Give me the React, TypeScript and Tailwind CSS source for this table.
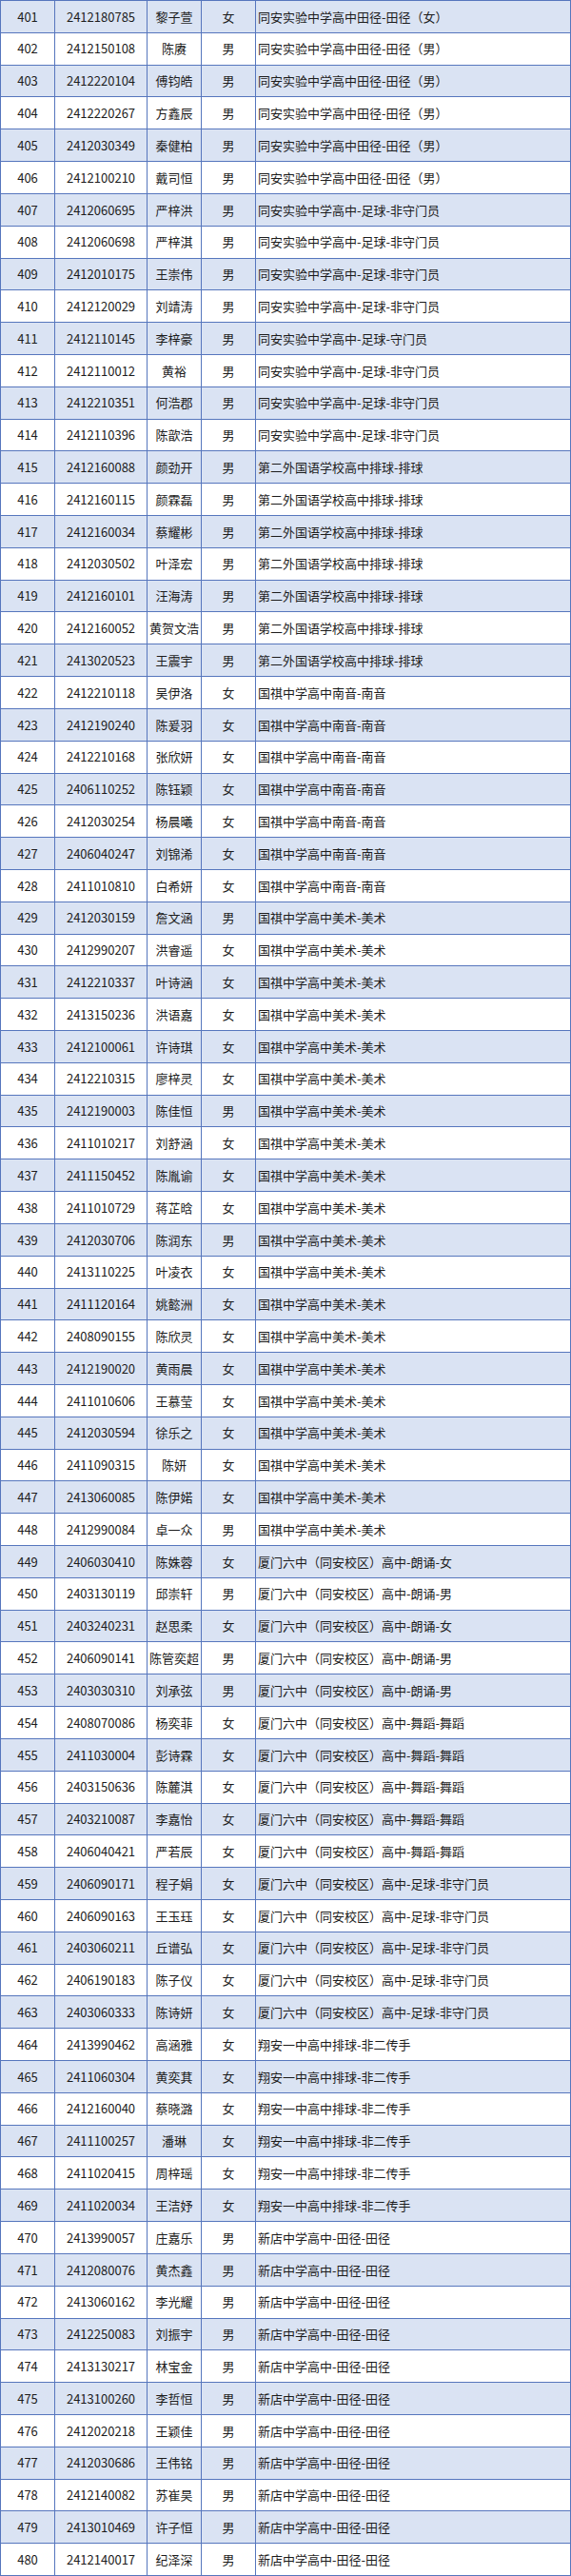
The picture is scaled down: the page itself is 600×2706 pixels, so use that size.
import React from 'react';

const rows: [string, string, string, string][] = [
  ['2412180785', '黎子萱', '女', '同安实验中学高中田径-田径（女）'],
  ['2412150108', '陈赓', '男', '同安实验中学高中田径-田径（男）'],
  ['2412220104', '傅钧皓', '男', '同安实验中学高中田径-田径（男）'],
  ['2412220267', '方鑫辰', '男', '同安实验中学高中田径-田径（男）'],
  ['2412030349', '秦健柏', '男', '同安实验中学高中田径-田径（男）'],
  ['2412100210', '戴司恒', '男', '同安实验中学高中田径-田径（男）'],
  ['2412060695', '严梓洪', '男', '同安实验中学高中-足球-非守门员'],
  ['2412060698', '严梓淇', '男', '同安实验中学高中-足球-非守门员'],
  ['2412010175', '王崇伟', '男', '同安实验中学高中-足球-非守门员'],
  ['2412120029', '刘靖涛', '男', '同安实验中学高中-足球-非守门员'],
  ['2412110145', '李梓豪', '男', '同安实验中学高中-足球-守门员'],
  ['2412110012', '黄裕', '男', '同安实验中学高中-足球-非守门员'],
  ['2412210351', '何浩郡', '男', '同安实验中学高中-足球-非守门员'],
  ['2412110396', '陈歆浩', '男', '同安实验中学高中-足球-非守门员'],
  ['2412160088', '颜劲开', '男', '第二外国语学校高中排球-排球'],
  ['2412160115', '颜霖磊', '男', '第二外国语学校高中排球-排球'],
  ['2412160034', '蔡耀彬', '男', '第二外国语学校高中排球-排球'],
  ['2412030502', '叶泽宏', '男', '第二外国语学校高中排球-排球'],
  ['2412160101', '汪海涛', '男', '第二外国语学校高中排球-排球'],
  ['2412160052', '黄贺文浩', '男', '第二外国语学校高中排球-排球'],
  ['2413020523', '王震宇', '男', '第二外国语学校高中排球-排球'],
  ['2412210118', '吴伊洛', '女', '国祺中学高中南音-南音'],
  ['2412190240', '陈爰羽', '女', '国祺中学高中南音-南音'],
  ['2412210168', '张欣妍', '女', '国祺中学高中南音-南音'],
  ['2406110252', '陈钰颖', '女', '国祺中学高中南音-南音'],
  ['2412030254', '杨晨曦', '女', '国祺中学高中南音-南音'],
  ['2406040247', '刘锦浠', '女', '国祺中学高中南音-南音'],
  ['2411010810', '白希妍', '女', '国祺中学高中南音-南音'],
  ['2412030159', '詹文涵', '男', '国祺中学高中美术-美术'],
  ['2412990207', '洪睿遥', '女', '国祺中学高中美术-美术'],
  ['2412210337', '叶诗涵', '女', '国祺中学高中美术-美术'],
  ['2413150236', '洪语嘉', '女', '国祺中学高中美术-美术'],
  ['2412100061', '许诗琪', '女', '国祺中学高中美术-美术'],
  ['2412210315', '廖梓灵', '女', '国祺中学高中美术-美术'],
  ['2412190003', '陈佳恒', '男', '国祺中学高中美术-美术'],
  ['2411010217', '刘舒涵', '女', '国祺中学高中美术-美术'],
  ['2411150452', '陈胤谕', '女', '国祺中学高中美术-美术'],
  ['2411010729', '蒋芷晗', '女', '国祺中学高中美术-美术'],
  ['2412030706', '陈润东', '男', '国祺中学高中美术-美术'],
  ['2413110225', '叶凌衣', '女', '国祺中学高中美术-美术'],
  ['2411120164', '姚懿洲', '女', '国祺中学高中美术-美术'],
  ['2408090155', '陈欣灵', '女', '国祺中学高中美术-美术'],
  ['2412190020', '黄雨晨', '女', '国祺中学高中美术-美术'],
  ['2411010606', '王慕莹', '女', '国祺中学高中美术-美术'],
  ['2412030594', '徐乐之', '女', '国祺中学高中美术-美术'],
  ['2411090315', '陈妍', '女', '国祺中学高中美术-美术'],
  ['2413060085', '陈伊婼', '女', '国祺中学高中美术-美术'],
  ['2412990084', '卓一众', '男', '国祺中学高中美术-美术'],
  ['2406030410', '陈姝蓉', '女', '厦门六中（同安校区）高中-朗诵-女'],
  ['2403130119', '邱崇轩', '男', '厦门六中（同安校区）高中-朗诵-男'],
  ['2403240231', '赵思柔', '女', '厦门六中（同安校区）高中-朗诵-女'],
  ['2406090141', '陈管奕超', '男', '厦门六中（同安校区）高中-朗诵-男'],
  ['2403030310', '刘承弦', '男', '厦门六中（同安校区）高中-朗诵-男'],
  ['2408070086', '杨奕菲', '女', '厦门六中（同安校区）高中-舞蹈-舞蹈'],
  ['2411030004', '彭诗霖', '女', '厦门六中（同安校区）高中-舞蹈-舞蹈'],
  ['2403150636', '陈麓淇', '女', '厦门六中（同安校区）高中-舞蹈-舞蹈'],
  ['2403210087', '李嘉怡', '女', '厦门六中（同安校区）高中-舞蹈-舞蹈'],
  ['2406040421', '严若辰', '女', '厦门六中（同安校区）高中-舞蹈-舞蹈'],
  ['2406090171', '程子娟', '女', '厦门六中（同安校区）高中-足球-非守门员'],
  ['2406090163', '王玉珏', '女', '厦门六中（同安校区）高中-足球-非守门员'],
  ['2403060211', '丘谱弘', '女', '厦门六中（同安校区）高中-足球-非守门员'],
  ['2406190183', '陈子仪', '女', '厦门六中（同安校区）高中-足球-非守门员'],
  ['2403060333', '陈诗妍', '女', '厦门六中（同安校区）高中-足球-非守门员'],
  ['2413990462', '高涵雅', '女', '翔安一中高中排球-非二传手'],
  ['2411060304', '黄奕萁', '女', '翔安一中高中排球-非二传手'],
  ['2412160040', '蔡晓潞', '女', '翔安一中高中排球-非二传手'],
  ['2411100257', '潘琳', '女', '翔安一中高中排球-非二传手'],
  ['2411020415', '周梓瑶', '女', '翔安一中高中排球-非二传手'],
  ['2411020034', '王洁妤', '女', '翔安一中高中排球-非二传手'],
  ['2413990057', '庄嘉乐', '男', '新店中学高中-田径-田径'],
  ['2412080076', '黄杰鑫', '男', '新店中学高中-田径-田径'],
  ['2413060162', '李光耀', '男', '新店中学高中-田径-田径'],
  ['2412250083', '刘振宇', '男', '新店中学高中-田径-田径'],
  ['2413130217', '林宝金', '男', '新店中学高中-田径-田径'],
  ['2413100260', '李哲恒', '男', '新店中学高中-田径-田径'],
  ['2412020218', '王颖佳', '男', '新店中学高中-田径-田径'],
  ['2412030686', '王伟铭', '男', '新店中学高中-田径-田径'],
  ['2412140082', '苏崔昊', '男', '新店中学高中-田径-田径'],
  ['2413010469', '许子恒', '男', '新店中学高中-田径-田径'],
  ['2412140017', '纪泽深', '男', '新店中学高中-田径-田径'],
];

const cell = 'flex items-center border-r border-[#5676bd] h-full';

export default function App() {
  return (
    <div className="w-[600px] bg-white border-t border-l border-[#5676bd] text-[13px] text-[#1c1c1c] font-['Noto_Sans_CJK_SC','Noto_Sans',sans-serif]">
      {rows.map(([id, name, sex, item], i) => (
        <div
          key={id + i}
          className={`flex h-[33.8125px] border-b border-[#5676bd] ${i % 2 === 0 ? 'bg-[#dae3f3]' : 'bg-white'}`}
        >
          <div className={`${cell} w-[57px] justify-center`}>{401 + i}</div>
          <div className={`${cell} w-[97px] justify-center`}>{id}</div>
          <div className={`${cell} w-[57px] justify-center whitespace-nowrap`}>{name}</div>
          <div className={`${cell} w-[57px] justify-center`}>{sex}</div>
          <div className={`${cell} flex-1 pl-[2px] whitespace-nowrap`}>{item}</div>
        </div>
      ))}
    </div>
  );
}
